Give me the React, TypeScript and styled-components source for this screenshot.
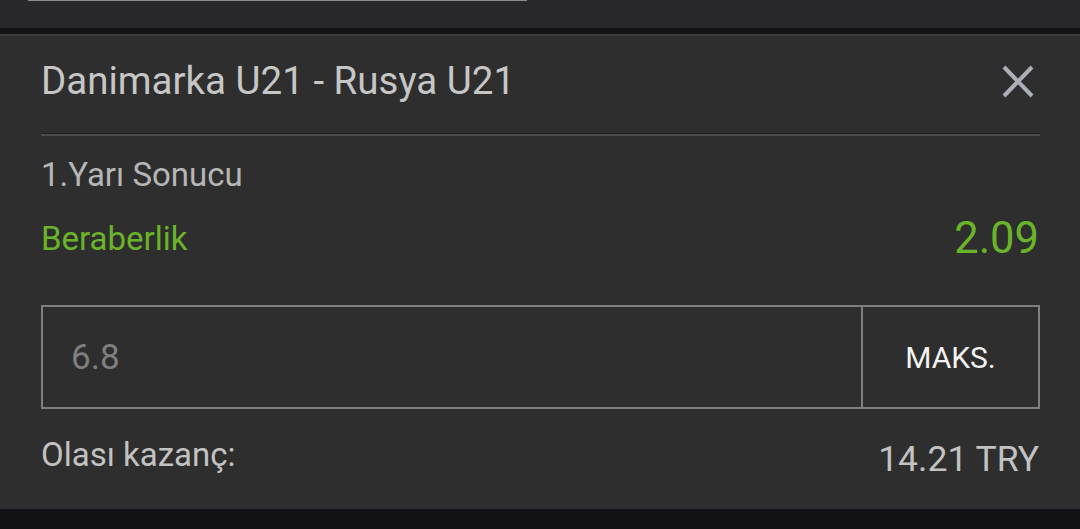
import React from "react";
import styled, { createGlobalStyle } from "styled-components";

const Global = createGlobalStyle`
  html, body { margin: 0; padding: 0; background: #2e2e2e; }
  body { font-family: Roboto, "Liberation Sans", Arial, sans-serif; }
`;

const Page = styled.div`
  width: 1080px;
  height: 529px;
  display: flex;
  flex-direction: column;
  overflow: hidden;
`;

const TopStrip = styled.div`
  height: 28px;
  background: #28282a;
  flex: none;
`;

const ActiveIndicator = styled.div`
  margin-left: 28px;
  width: 499px;
  height: 1px;
  background: #8c8c8c;
`;

const DarkBand = styled.div<{ $h: number }>`
  height: ${(p) => p.$h}px;
  background: #111116;
  flex: none;
`;

const Edge = styled.div`
  height: 2px;
  background: #3a3a3a;
  flex: none;
`;

const Panel = styled.div`
  flex: 1;
  background: #2e2e2e;
  padding: 0 40px 0 41px;
  display: flex;
  flex-direction: column;
`;

const Header = styled.div`
  height: 97px;
  box-sizing: border-box;
  padding-bottom: 7px;
  display: flex;
  align-items: center;
  justify-content: space-between;
`;

const Title = styled.div`
  font-size: 38.5px;
  color: #c6c6c6;
  line-height: 44px;
`;

const CloseButton = styled.button`
  width: 32px;
  height: 33px;
  margin-right: 6px;
  padding: 0;
  border: none;
  background: transparent;
  display: flex;
  cursor: pointer;
`;

const Divider = styled.div`
  height: 2px;
  border-top: 1px solid #1f1f1f;
  background: #4a4a4a;
`;

const MarketLabel = styled.div`
  margin-top: 19px;
  font-size: 33px;
  line-height: 40px;
  color: #b6b6b6;
`;

const SelectionRow = styled.div`
  margin-top: 19px;
  height: 48px;
  display: flex;
  align-items: center;
  justify-content: space-between;
  color: #6ab42a;
`;

const SelectionName = styled.div`
  font-size: 33px;
`;

const Odds = styled.div`
  font-size: 43.5px;
  margin-right: 1px;
`;

const StakeBox = styled.div`
  margin-top: 43px;
  height: 104px;
  box-sizing: border-box;
  border: 2px solid #7f7f7f;
  display: flex;
`;

const StakeInput = styled.div`
  flex: 1;
  display: flex;
  align-items: center;
  padding-left: 28px;
  font-size: 35px;
  color: #7f7f7f;
  border-right: 2px solid #7f7f7f;
`;

const MaxButton = styled.div`
  width: 175px;
  display: flex;
  align-items: center;
  justify-content: center;
  font-size: 30px;
  color: #f2f2f2;
`;

const PayoutRow = styled.div`
  margin-top: 26px;
  height: 44px;
  display: flex;
  justify-content: space-between;
  align-items: center;
  color: #c2c2c2;
`;

const PayoutLabel = styled.div`
  font-size: 33px;
  margin-top: -6px;
`;

const PayoutValue = styled.div`
  font-size: 35.5px;
  margin-top: 3px;
  margin-right: 1px;
`;

export default function App() {
  return (
    <Page>
      <Global />
      <TopStrip>
        <ActiveIndicator />
      </TopStrip>
      <DarkBand $h={6} />
      <Edge />
      <Panel>
        <Header>
          <Title>Danimarka U21 - Rusya U21</Title>
          <CloseButton aria-label="Kapat">
            <svg width="32" height="33" viewBox="0 0 32 33">
              <path
                d="M2 2 L30 31 M30 2 L2 31"
                stroke="#abafb7"
                strokeWidth="4"
                fill="none"
              />
            </svg>
          </CloseButton>
        </Header>
        <Divider />
        <MarketLabel>1.Yarı Sonucu</MarketLabel>
        <SelectionRow>
          <SelectionName>Beraberlik</SelectionName>
          <Odds>2.09</Odds>
        </SelectionRow>
        <StakeBox>
          <StakeInput>6.8</StakeInput>
          <MaxButton>MAKS.</MaxButton>
        </StakeBox>
        <PayoutRow>
          <PayoutLabel>Olası kazanç:</PayoutLabel>
          <PayoutValue>14.21 TRY</PayoutValue>
        </PayoutRow>
      </Panel>
      <DarkBand $h={20} />
    </Page>
  );
}
